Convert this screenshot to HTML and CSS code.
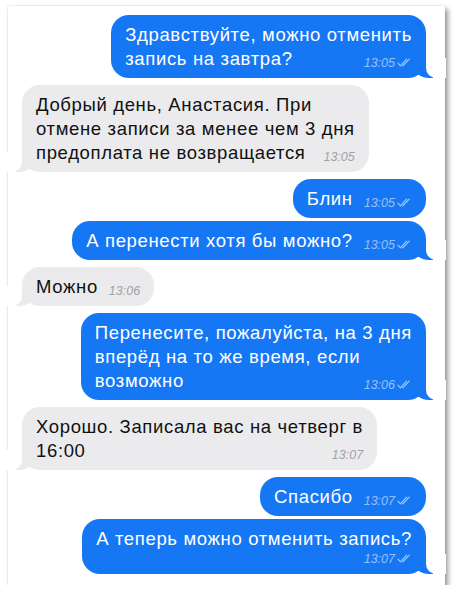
FILE: index.html
```html
<!DOCTYPE html>
<html lang="ru">
<head>
<meta charset="utf-8">
<link rel="stylesheet" href="styles.css">
</head>
<body>
<div class="card">
  <div class="msg out tail">Здравствуйте, можно отменить<br>запись на завтра?<span class="meta">13:05<svg class="chk" viewBox="0 0 15 9" width="15" height="9"><path d="M1 5.2 L3.4 7.8 L9.6 1.2 M5.8 7.8 L12.2 1.2"/></svg></span></div>
  <div class="msg in tail">Добрый день, Анастасия. При<br>отмене записи за менее чем 3 дня<br>предоплата не возвращается<span class="meta">13:05</span></div>
  <div class="msg out">Блин<span class="meta">13:05<svg class="chk" viewBox="0 0 15 9" width="15" height="9"><path d="M1 5.2 L3.4 7.8 L9.6 1.2 M5.8 7.8 L12.2 1.2"/></svg></span></div>
  <div class="msg out cont tail">А перенести хотя бы можно?<span class="meta">13:05<svg class="chk" viewBox="0 0 15 9" width="15" height="9"><path d="M1 5.2 L3.4 7.8 L9.6 1.2 M5.8 7.8 L12.2 1.2"/></svg></span></div>
  <div class="msg in tail">Можно<span class="meta">13:06</span></div>
  <div class="msg out tail">Перенесите, пожалуйста, на 3 дня<br>вперёд на то же время, если<br>возможно<span class="meta">13:06<svg class="chk" viewBox="0 0 15 9" width="15" height="9"><path d="M1 5.2 L3.4 7.8 L9.6 1.2 M5.8 7.8 L12.2 1.2"/></svg></span></div>
  <div class="msg in tail">Хорошо. Записала вас на четверг в<br>16:00<span class="meta">13:07</span></div>
  <div class="msg out">Спасибо<span class="meta">13:07<svg class="chk" viewBox="0 0 15 9" width="15" height="9"><path d="M1 5.2 L3.4 7.8 L9.6 1.2 M5.8 7.8 L12.2 1.2"/></svg></span></div>
  <div class="msg out cont tail">А теперь можно отменить запись?<span class="meta below">13:07<svg class="chk" viewBox="0 0 15 9" width="15" height="9"><path d="M1 5.2 L3.4 7.8 L9.6 1.2 M5.8 7.8 L12.2 1.2"/></svg></span></div>
</div>
</body>
</html>
```
FILE: styles.css
```css
html, body {
  margin: 0;
  padding: 0;
  background: #ffffff;
}
body {
  padding: 6px 0 0 8px;
  font-family: "Liberation Sans", Arial, sans-serif;
}
.card {
  width: 437px;
  height: 579px;
  box-sizing: border-box;
  background: #ffffff;
  box-shadow: 3px 3px 5px rgba(0, 0, 0, 0.4), 0 0 1px rgba(0, 0, 0, 0.25);
  padding: 9px 19px 0 14px;
  display: flex;
  flex-direction: column;
  align-items: flex-start;
}
.msg {
  position: relative;
  font-size: 18.5px;
  letter-spacing: 0.65px;
  line-height: 24px;
  padding: 7.5px 14px;
  border-radius: 18px;
  margin-top: 7px;
  color: #111111;
}
.msg:first-child {
  margin-top: 0;
}
.msg.cont {
  margin-top: 3px;
}
.msg.out {
  align-self: flex-end;
  background: #1677f5;
  color: #ffffff;
}
.msg.in {
  background: #ebebed;
}
.meta {
  float: right;
  font-size: 12.5px;
  letter-spacing: 0;
  line-height: 16px;
  font-style: italic;
  margin: 8px 0 0 11px;
  display: flex;
  align-items: center;
  gap: 2px;
}
.meta.below {
  float: none;
  justify-content: flex-end;
  margin: 0;
}
.msg.out .meta {
  color: rgba(255, 255, 255, 0.55);
}
.msg.in .meta {
  color: #a2a2a6;
}
.chk {
  fill: none;
  stroke: rgba(255, 255, 255, 0.6);
  stroke-width: 1.2;
  stroke-linecap: round;
  stroke-linejoin: round;
}
.msg.tail::before,
.msg.tail::after {
  content: "";
  position: absolute;
  bottom: 0;
  height: 20px;
}
.msg.out.tail::before {
  right: -7px;
  width: 20px;
  background: #1677f5;
  border-bottom-left-radius: 16px 14px;
}
.msg.out.tail::after {
  right: -20px;
  width: 20px;
  background: #ffffff;
  border-bottom-left-radius: 10px;
}
.msg.in.tail::before {
  left: -7px;
  width: 20px;
  background: #ebebed;
  border-bottom-right-radius: 16px 14px;
}
.msg.in.tail::after {
  left: -20px;
  width: 20px;
  background: #ffffff;
  border-bottom-right-radius: 10px;
}
```
